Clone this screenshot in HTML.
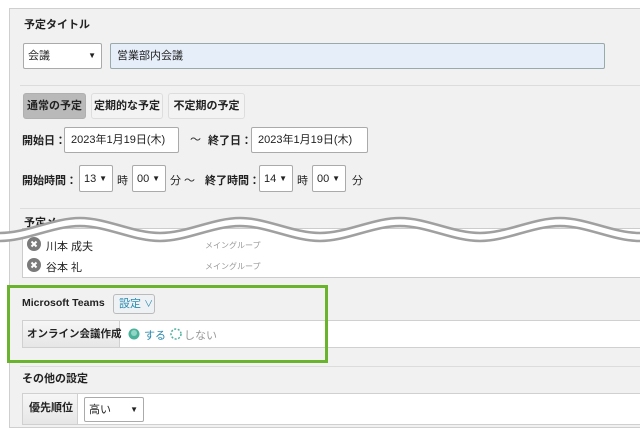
<!DOCTYPE html>
<html><head><meta charset="utf-8"><style>
*{margin:0;padding:0;box-sizing:border-box}
body{width:640px;height:422px;overflow:hidden;background:#fff;position:relative;font-family:"Liberation Sans","Noto Sans CJK JP",sans-serif;font-size:11px;color:#222}
.a{position:absolute;white-space:nowrap}
.panel{left:9px;top:8px;width:640px;height:420px;background:#f1f1f1;border:1px solid #cfcfcf}
.b{font-weight:bold}
.box{position:absolute;background:#fff;border:1px solid #aaa;border-radius:2px;font-size:11px;line-height:1;white-space:nowrap}
.sel::after{content:"▼";position:absolute;right:5px;top:50%;transform:translateY(-50%);font-size:8px}
.btn{position:absolute;border:1px solid #ddd;border-radius:3px;background:#f3f3f3;font-weight:bold;text-align:center;font-size:11px;white-space:nowrap}
.hl{position:absolute;height:1px;background:#dcdcdc;left:20px;width:620px}
</style></head><body>
<div class="a panel"></div>
<div class="a b" style="left:24px;top:16px">予定タイトル</div>
<div class="box sel" style="left:23px;top:43px;width:79px;height:26px;padding:7px 4px">会議</div>
<div class="box" style="left:110px;top:43px;width:495px;height:26px;padding:7px 6px;background:#e6eefa;border-color:#9aa">営業部内会議</div>
<div class="hl" style="top:85px"></div>
<div class="btn" style="left:23px;top:93px;width:63px;height:26px;line-height:24px;background:#b9b9b9;border-color:#b0b0b0">通常の予定</div>
<div class="btn" style="left:91px;top:93px;width:72px;height:26px;line-height:24px">定期的な予定</div>
<div class="btn" style="left:168px;top:93px;width:77px;height:26px;line-height:24px">不定期の予定</div>
<div class="a b" style="left:22px;top:132px">開始日：</div>
<div class="box" style="left:64px;top:127px;width:115px;height:26px;padding:7px 6px">2023年1月19日(木)</div>
<div class="a" style="left:190px;top:131px">～</div>
<div class="a b" style="left:208px;top:132px">終了日：</div>
<div class="box" style="left:251px;top:127px;width:117px;height:26px;padding:7px 6px">2023年1月19日(木)</div>
<div class="a b" style="left:22px;top:172px">開始時間：</div>
<div class="box sel" style="left:79px;top:165px;width:34px;height:27px;padding:8px 4px">13</div>
<div class="a" style="left:117px;top:172px">時</div>
<div class="box sel" style="left:132px;top:165px;width:34px;height:27px;padding:8px 4px">00</div>
<div class="a" style="left:170px;top:172px">分 ～</div>
<div class="a b" style="left:205px;top:172px">終了時間：</div>
<div class="box sel" style="left:259px;top:165px;width:34px;height:27px;padding:8px 4px">14</div>
<div class="a" style="left:297px;top:172px">時</div>
<div class="box sel" style="left:312px;top:165px;width:34px;height:27px;padding:8px 4px">00</div>
<div class="a" style="left:352px;top:172px">分</div>
<div class="hl" style="top:208px"></div>
<div class="a b" style="left:24px;top:214px">予定メ</div>
<div class="a" style="left:22px;top:228px;width:620px;height:50px;background:#fff;border:1px solid #ccc"></div>
<svg class="a" style="left:0;top:0" width="640" height="250" viewBox="0 0 640 250">
<path d="M0,233 C27,233 53,218 80,218 C107,218 133,233 160,233 C187,233 213,218 240,218 C267,218 293,233 320,233 C347,233 373,218 400,218 C427,218 453,233 480,233 C507,233 533,218 560,218 C587,218 613,233 640,233 L640,241 C613,241 587,226 560,226 C533,226 507,241 480,241 C453,241 427,226 400,226 C373,226 347,241 320,241 C293,241 267,226 240,226 C213,226 187,241 160,241 C133,241 107,226 80,226 C53,226 27,241 0,241 Z" fill="#fff"/>
<path d="M0,233 C27,233 53,218 80,218 C107,218 133,233 160,233 C187,233 213,218 240,218 C267,218 293,233 320,233 C347,233 373,218 400,218 C427,218 453,233 480,233 C507,233 533,218 560,218 C587,218 613,233 640,233" fill="none" stroke="#a0a0a0" stroke-width="2.5"/>
<path d="M0,241 C27,241 53,226 80,226 C107,226 133,241 160,241 C187,241 213,226 240,226 C267,226 293,241 320,241 C347,241 373,226 400,226 C427,226 453,241 480,241 C507,241 533,226 560,226 C587,226 613,241 640,241" fill="none" stroke="#a0a0a0" stroke-width="2.5"/>
</svg>
<svg class="a" style="left:27px;top:237px" width="14" height="14"><circle cx="7" cy="7" r="7" fill="#7a7a7a"/><path d="M4.5,4.5L9.5,9.5M9.5,4.5L4.5,9.5" stroke="#fff" stroke-width="2"/></svg>
<div class="a" style="left:46px;top:238px">川本 成夫</div>
<div class="a" style="left:205px;top:240px;font-size:8px;color:#999">メイングループ</div>
<svg class="a" style="left:27px;top:258px" width="14" height="14"><circle cx="7" cy="7" r="7" fill="#7a7a7a"/><path d="M4.5,4.5L9.5,9.5M9.5,4.5L4.5,9.5" stroke="#fff" stroke-width="2"/></svg>
<div class="a" style="left:46px;top:259px">谷本 礼</div>
<div class="a" style="left:205px;top:261px;font-size:8px;color:#999">メイングループ</div>
<div class="a b" style="left:22px;top:297px;font-size:10.5px">Microsoft Teams</div>
<div class="a" style="left:113px;top:294px;width:42px;height:20px;border:1px solid #bbb;border-radius:3px;background:#eef2f5;color:#2a8ab0;padding:4px 5px;font-size:11px;line-height:1">設定 <span style="font-size:9px">∨</span></div>
<div class="a" style="left:22px;top:320px;width:620px;height:28px;background:#fff;border:1px solid #d0d0d0"></div>
<div class="a b" style="left:22px;top:320px;width:98px;height:28px;background:linear-gradient(#f6f6f6,#e6e6e6);border:1px solid #d0d0d0;padding:0 4px;line-height:26px;font-size:10.5px">オンライン会議作成</div>
<svg class="a" style="left:128px;top:328px" width="12" height="12"><circle cx="6" cy="6" r="5.5" fill="#4bb29a"/><circle cx="6" cy="5" r="3" fill="#8fd6c6"/></svg>
<div class="a" style="left:144px;top:327px;color:#2a8ab0">する</div>
<svg class="a" style="left:170px;top:328px" width="12" height="12"><circle cx="6" cy="6" r="5" fill="none" stroke="#4bb29a" stroke-width="1.5" stroke-dasharray="2 1.6"/></svg>
<div class="a" style="left:184px;top:327px;color:#999">しない</div>
<div class="a" style="left:7px;top:285px;width:321px;height:78px;border:3px solid #6ab42d"></div>
<div class="hl" style="top:366px"></div>
<div class="a b" style="left:22px;top:370px">その他の設定</div>
<div class="a" style="left:22px;top:393px;width:620px;height:32px;background:#fff;border:1px solid #d0d0d0"></div>
<div class="a b" style="left:22px;top:393px;width:56px;height:32px;background:linear-gradient(#f6f6f6,#e6e6e6);border:1px solid #d0d0d0;padding:0 6px;line-height:28px">優先順位</div>
<div class="box sel" style="left:84px;top:397px;width:60px;height:25px;padding:7px 4px">高い</div>
</body></html>
